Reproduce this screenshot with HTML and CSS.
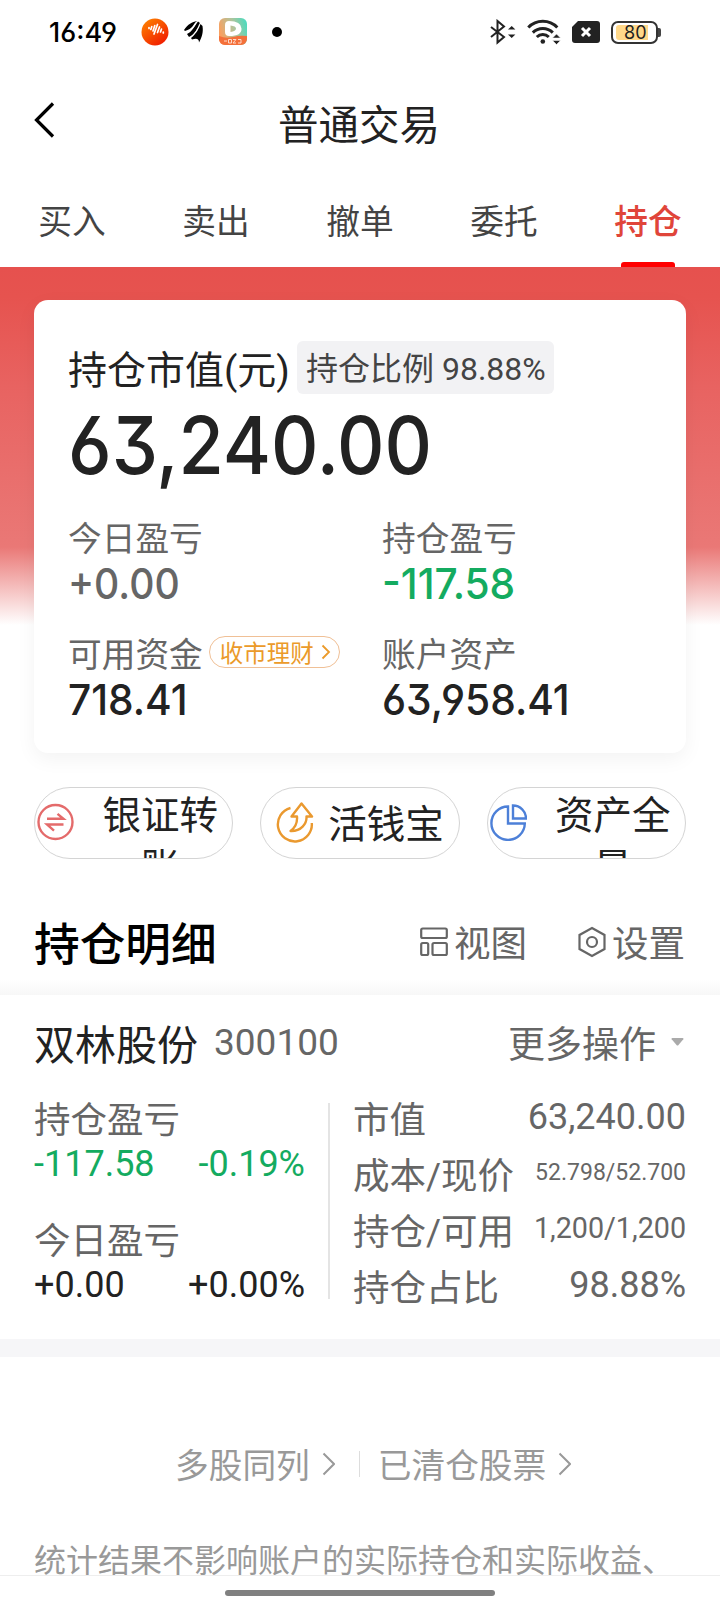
FILE: index.html
```html
<!DOCTYPE html>
<html lang="zh-CN">
<head>
    <meta charset="UTF-8">
    <meta name="viewport" content="width=device-width, initial-scale=1.0">
    <title>普通交易</title>
    <link rel="stylesheet" href="styles.css">
</head>
<body>
    <div class="page">
        <div class="status-bar">
            <span class="time">16:49</span>
            <div class="status-left">
                <svg width="28" height="28" viewBox="0 0 28 28">
                    <defs>
                        <linearGradient id="orange" x1="0" y1="0" x2="0.8" y2="1">
                            <stop offset="0" stop-color="#ff8a00"/>
                            <stop offset="1" stop-color="#f01800"/>
                        </linearGradient>
                    </defs>
                    <circle cx="14" cy="14" r="13.5" fill="url(#orange)"/>
                    <path d="M8 9.5v1M10.8 8.5l-1 3M13.800 7.500l-1.800 5.500M16.500 6.500l-3.500 9.500M18.500 9l-2 5.500M20.500 11l-1 3M22.300 14v1" stroke="#fff" stroke-width="1.700" stroke-linecap="round" fill="none"/>
                </svg>
                <svg width="20" height="22" viewBox="0 0 20 22">
                    <path d="M0 9C4 3 8 1 13 0C9 3 9 8 1 10z" fill="#000"/>
                    <path d="M3 13C8 11 10 6 14 0.500L16 2C14 7 10 14 5 16z" fill="#000"/>
                    <path d="M7 17C13 12 15 7 16.500 3L18.500 5C19.500 11 18 16 15 21.500C15 18 13 17 8 18.500z" fill="#000"/>
                    <path d="M12.500 1C10 5 9 9 3 11.500M15.800 2.500C14 8 11 13 6.500 16.500" stroke="#fff" stroke-width=".7" fill="none"/>
                </svg>
                <svg width="28" height="28" viewBox="0 0 28 28">
                    <defs>
                        <linearGradient id="rainbow" x1="0" y1="0.400" x2="1" y2="0.100">
                            <stop offset="0" stop-color="#f9a060"/>
                            <stop offset="0.500" stop-color="#b0c49c"/>
                            <stop offset="1" stop-color="#45dcc0"/>
                        </linearGradient>
                    </defs>
                    <rect width="28" height="27" rx="6" fill="url(#rainbow)"/>
                    <path d="M0 18q7 3 14 1t14-1v3a6 6 0 0 1-6 6H6a6 6 0 0 1-6-6z" fill="#f4703a"/>
                    <path d="M10 3q12 0 12.500 7.500T10 18q-4 0-4-4V7q0-4 4-4zM11.500 7.500v6.500q5.500-1 5.500-3.500t-5.500-3z" fill="#fff" fill-rule="evenodd"/>
                    <path d="M5 23h3M9.500 21.500h3v3.500h-3zM14 21.500h3l-3 3.500h3M19 21.500h3v3.500h-3" stroke="#ffd9c8" stroke-width="1" fill="none"/>
                </svg>
                <span class="dot"></span>
            </div>
            <div class="status-right">
                <svg width="26" height="26" viewBox="0 0 26 26" fill="none" stroke="#222" stroke-width="2">
                    <path d="M1 8l13 10-6.500 5.500V2L14 7.500 1 18"/>
                    <path d="M18 10.500l3.700-3.500 3.700 3.500zM18 15.500l3.700 3.500 3.700-3.500z" fill="#222" stroke="none"/>
                </svg>
                <svg width="34" height="26" viewBox="0 0 34 26" fill="none" stroke="#222" stroke-width="3">
                    <path d="M1.300 8.500a20 20 0 0 1 29 0M5.800 13.600a14 14 0 0 1 20 0M9.800 18a8.500 8.500 0 0 1 12 0"/>
                    <circle cx="15.800" cy="22.500" r="2.300" fill="#222" stroke="none"/>
                    <path d="M25.500 19l4-4 4 4zM25.500 21.500l4 4 4-4z" fill="#222" stroke="#fff" stroke-width=".5"/>
                </svg>
                <svg width="28" height="22" viewBox="0 0 28 22">
                    <path d="M6 0h19q3 0 3 3v16q0 3-3 3H3q-3 0-3-3V6z" fill="#222"/>
                    <path d="M10 7l8 8M18 7l-8 8" stroke="#fff" stroke-width="3"/>
                </svg>
                <div class="battery"><span class="battery-fill">80</span></div>
            </div>
        </div>

        <div class="nav">
            <svg class="back" width="22" height="38" viewBox="0 0 22 38">
                <path d="M19 2.500L2.500 19 19 35.500" fill="none" stroke="#000" stroke-width="3.200"/>
            </svg>
            <div class="nav-title">普通交易</div>
        </div>

        <div class="tabs">
            <div class="tab">买入</div>
            <div class="tab">卖出</div>
            <div class="tab">撤单</div>
            <div class="tab">委托</div>
            <div class="tab active">持仓</div>
        </div>

        <div class="hero">
            <div class="card">
                <div class="card-head">
                    <span class="card-title">持仓市值(元)</span>
                    <span class="ratio">持仓比例 98.88%</span>
                </div>
                <div class="total"><span>63,240.00</span></div>
                <div class="card-grid">
                    <div class="stat">
                        <div class="stat-label">今日盈亏</div>
                        <div class="stat-value flat"><span>+0.00</span></div>
                    </div>
                    <div class="stat">
                        <div class="stat-label">持仓盈亏</div>
                        <div class="stat-value green"><span>-117.58</span></div>
                    </div>
                    <div class="stat">
                        <div class="stat-label">可用资金
                            <span class="badge">收市理财
                                <svg width="10" height="16" viewBox="0 0 10 16"><path d="M1.500 1.500L8 8l-6.500 6.500" fill="none" stroke="#eb9a2a" stroke-width="1.800"/></svg>
                            </span>
                        </div>
                        <div class="stat-value"><span>718.41</span></div>
                    </div>
                    <div class="stat">
                        <div class="stat-label">账户资产</div>
                        <div class="stat-value"><span>63,958.41</span></div>
                    </div>
                </div>
            </div>
        </div>

        <div class="actions">
            <div class="action wrap">
                <svg width="38" height="38" viewBox="0 0 38 38" fill="none" stroke="#e46b6b" stroke-width="2.400">
                    <circle cx="19.500" cy="19" r="17"/>
                    <path d="M11 15.800h16.500l-6-5M27.500 21.500H11l7 6.200"/>
                </svg>
                <span>银证转账</span>
            </div>
            <div class="action">
                <svg width="38" height="42" viewBox="0 0 38 42" fill="none" stroke="#ea992f" stroke-width="2.400" stroke-linejoin="round">
                    <path d="M14.500 6A17 17 0 1 0 35.800 21"/>
                    <path d="M25.500 1.500L36 14.500h-5.500C31 21.500 25 29.500 14.500 29C20 25 21.500 20.500 21 14.500h-5.500z"/>
                </svg>
                <span>活钱宝</span>
            </div>
            <div class="action wrap">
                <svg width="38" height="38" viewBox="0 0 38 38" fill="none" stroke="#4d80d8" stroke-width="2.400">
                    <path d="M19 3.500A16.700 16.700 0 1 0 35.800 20.500H19z"/>
                    <path d="M24 2.500V15.500H37A13 13 0 0 0 24 2.500z"/>
                </svg>
                <span>资产全景</span>
            </div>
        </div>

        <div class="section-head">
            <div class="section-title">持仓明细</div>
            <div class="tool">
                <svg width="28" height="30" viewBox="0 0 28 30" fill="none" stroke="#666" stroke-width="2.200">
                    <rect x="1.200" y="1.500" width="25.600" height="9.500" rx="1.500"/>
                    <rect x="1.200" y="16" width="7" height="12" rx="1.500"/>
                    <rect x="12.500" y="16" width="14.300" height="12" rx="1.500"/>
                </svg>
                <span>视图</span>
            </div>
            <div class="tool">
                <svg width="28" height="32" viewBox="0 0 28 32" fill="none" stroke="#666" stroke-width="2.200">
                    <path d="M14 2l12.500 7v14L14 30 1.500 23V9z"/>
                    <circle cx="14" cy="16" r="5"/>
                </svg>
                <span>设置</span>
            </div>
        </div>

        <div class="holding">
            <div class="holding-head">
                <span class="stock-name">双林股份</span>
                <span class="stock-code">300100</span>
                <span class="more">更多操作</span>
                <svg width="13" height="8" viewBox="0 0 13 8"><path d="M1.500 0h10q1.500 0 .8 1.200L7.500 7q-1 1-2 0L.7 1.200Q0 0 1.500 0z" fill="#aaa"/></svg>
            </div>
            <div class="holding-body">
                <div class="profit">
                    <div class="label">持仓盈亏</div>
                    <div class="values green"><span>-117.58</span><span>-0.19%</span></div>
                    <div class="label second">今日盈亏</div>
                    <div class="values"><span>+0.00</span><span>+0.00%</span></div>
                </div>
                <div class="detail">
                    <div class="row"><span>市值</span><span class="num">63,240.00</span></div>
                    <div class="row"><span>成本/现价</span><span class="num small">52.798/52.700</span></div>
                    <div class="row"><span>持仓/可用</span><span class="num medium">1,200/1,200</span></div>
                    <div class="row"><span>持仓占比</span><span class="num">98.88%</span></div>
                </div>
            </div>
        </div>

        <div class="links">
            <span>多股同列</span>
            <svg width="13" height="24" viewBox="0 0 13 24"><path d="M1.500 1.500L12 12 1.500 22.500" fill="none" stroke="#999" stroke-width="2"/></svg>
            <i class="split"></i>
            <span>已清仓股票</span>
            <svg width="13" height="24" viewBox="0 0 13 24"><path d="M1.500 1.500L12 12 1.500 22.500" fill="none" stroke="#999" stroke-width="2"/></svg>
        </div>

        <div class="note">统计结果不影响账户的实际持仓和实际收益、</div>

        <div class="home-area"><div class="home-bar"></div></div>
    </div>
</body>
</html>
```
FILE: styles.css
```css
* {
    box-sizing: border-box;
}

body {
    margin: 0;
    background-color: #fff;
    font-family: Roboto, "Noto Sans CJK SC", sans-serif;
    color: #222;
}

svg {
    display: block;
    flex-shrink: 0;
}

.page {
    width: 720px;
    height: 1612px;
    overflow: hidden;
    display: flex;
    flex-direction: column;
    white-space: nowrap;
}

/* status bar */
.status-bar {
    height: 64px;
    padding: 0 58px 0 49px;
    display: flex;
    align-items: center;
}

.time {
    width: 92px;
    font-family: Inter, sans-serif;
    font-feature-settings: "cv03", "cv04";
    font-size: 27px;
    font-weight: 500;
    color: #000;
}

.status-left {
    display: flex;
    align-items: center;
    gap: 15px;
}

.dot {
    width: 10px;
    height: 10px;
    margin-left: 10px;
    border-radius: 50%;
    background-color: #000;
}

.status-right {
    display: flex;
    align-items: center;
    gap: 11px;
    margin-left: auto;
}

.battery {
    position: relative;
    width: 47px;
    height: 23px;
    padding: 3px;
    margin-right: 4px;
    border: 2px solid #333;
    border-radius: 7px;
}

.battery::after {
    content: "";
    position: absolute;
    right: -5px;
    top: 5px;
    width: 3px;
    height: 9px;
    border-radius: 0 2px 2px 0;
    background-color: #444;
}

.battery-fill {
    display: block;
    width: 32px;
    height: 15px;
    margin-top: -1px;
    padding-left: 8px;
    border-radius: 3px 0 0 3px;
    background-color: #ffd88a;
    font-family: Inter, sans-serif;
    font-size: 18px;
    line-height: 15px;
}

/* title */
.nav {
    height: 116px;
    padding: 0 34px;
    display: grid;
    grid-template-columns: 22px 1fr 22px;
    align-items: center;
}

.back {
    margin-bottom: 4px;
}

.nav-title {
    text-align: center;
    font-size: 40.5px;
    margin-left: -2px;
}

.tabs {
    height: 87px;
    display: grid;
    grid-template-columns: repeat(5, 1fr);
}

.tab {
    display: flex;
    flex-direction: column;
    align-items: center;
    padding-top: 18px;
    font-size: 33.7px;
    line-height: 50px;
    color: #444;
}

.tab.active {
    color: #e0453a;
    font-weight: 500;
}

.tab.active::after {
    content: "";
    width: 54px;
    height: 5px;
    margin-top: 14px;
    border-radius: 3px 3px 0 0;
    background-color: #f00;
}

/* summary card */
.hero {
    height: 486px;
    padding: 33px 34px 0;
    background: linear-gradient(#e6514e 0, #e6534f 30px, #e86361 120px, #ea7876 280px, #ffffff 358px);
}

.card {
    height: 453px;
    padding: 41px 34px 0;
    border-radius: 14px;
    background-color: #fff;
    box-shadow: 0 6px 20px rgba(0, 0, 0, 0.05);
}

.card-head {
    display: flex;
    align-items: center;
    height: 53px;
}

.card-title {
    width: 229px;
    padding-bottom: 2px;
    font-size: 39px;
}

.ratio {
    width: 257px;
    height: 53px;
    padding-left: 9px;
    border-radius: 6px;
    background-color: #f2f2f4;
    font-size: 32px;
    line-height: 56px;
    color: #444;
}

.total {
    height: 117px;
    font-family: Inter, sans-serif;
    font-feature-settings: "cv03", "cv04", "cv09";
    font-size: 80px;
    font-weight: 500;
    line-height: 101px;
}

.total span,
.stat-value span {
    display: inline-block;
    transform: scaleX(0.92);
    transform-origin: left;
}

.stat-value span {
    transform: scaleX(0.945);
}

.card-grid {
    display: grid;
    grid-template-columns: 314px 1fr;
    row-gap: 17px;
}

.stat-label {
    display: flex;
    align-items: center;
    height: 49px;
    padding-top: 2px;
    font-size: 33.7px;
    color: #666;
}

.stat-value {
    height: 50px;
    font-family: Inter, sans-serif;
    font-feature-settings: "cv03", "cv04", "cv09";
    font-size: 43px;
    font-weight: 500;
    line-height: 46px;
}

.badge {
    display: flex;
    align-items: center;
    gap: 7px;
    width: 131px;
    height: 32px;
    margin: 0 0 2px 6px;
    padding-left: 10px;
    border: 1px solid #f0c096;
    border-radius: 16px;
    font-size: 23.5px;
    color: #eb9a2a;
}

.flat {
    color: #666;
}

.flat span {
    transform: scaleX(0.91);
}

.green {
    color: #14ab60;
}

/* shortcut pills */
.actions {
    display: grid;
    grid-template-columns: repeat(3, 1fr);
    gap: 27px;
    padding: 34px 34px 0;
}

.action {
    display: flex;
    align-items: center;
    justify-content: center;
    gap: 14px;
    height: 72px;
    overflow: hidden;
    border: 1px solid #d4d4d4;
    border-radius: 36px;
    font-size: 38.5px;
    line-height: 52px;
}

.action span {
    padding-top: 4px;
}

.action.wrap {
    align-items: flex-start;
    justify-content: flex-start;
    gap: 20px;
    padding-left: 1px;
}

.action.wrap svg {
    margin-top: 15px;
}

.action.wrap span {
    flex: 1;
    padding: 2px 13px 0 7px;
    text-align: center;
    white-space: normal;
}

/* positions */
.section-head {
    display: flex;
    align-items: center;
    height: 136px;
    padding: 28px 35px 0 34px;
    background: linear-gradient(#fff 120px, #f7f7f7 136px);
}

.section-title {
    flex: 1;
    font-size: 45.700px;
    font-weight: 500;
    color: #000;
}

.tool {
    display: flex;
    align-items: center;
    gap: 6px;
    margin-left: 51px;
    font-size: 36.5px;
    color: #666;
}

.tool svg {
    margin-bottom: -1px;
}

.holding {
    height: 362px;
    padding: 17px 34px 0;
    border-bottom: 18px solid #f6f6f8;
}

.holding-head {
    display: flex;
    align-items: center;
    height: 60px;
}

.stock-name {
    width: 180px;
    font-size: 41px;
}

.stock-code {
    flex: 1;
    font-size: 37px;
    color: #666;
}

.more {
    margin-right: 15px;
    padding-bottom: 1px;
    font-size: 37px;
    color: #666;
}

.holding-head svg {
    margin-right: 2px;
}

.holding-body {
    display: flex;
    padding-top: 31px;
    font-size: 36.5px;
    line-height: 44px;
}

.profit {
    width: 296px;
    height: 196px;
    padding-right: 23px;
    border-right: 2px solid #e4e4e4;
}

.label {
    height: 39px;
    line-height: 36px;
    color: #666;
}

.label.second {
    margin-top: 38px;
}

.values {
    display: flex;
    justify-content: space-between;
    font-size: 36px;
}

.detail {
    flex: 1;
    padding-left: 23px;
    margin-top: -10px;
    color: #666;
}

.row {
    display: flex;
    justify-content: space-between;
    height: 56px;
    line-height: 56px;
}

.num {
    font-size: 36px;
    line-height: 48px;
}

.num.small {
    font-size: 23px;
    line-height: 47px;
}

.num.medium {
    font-size: 28.700px;
    line-height: 47px;
}

/* footer */
.links {
    display: flex;
    align-items: center;
    height: 168px;
    padding: 45px 0 0 175px;
    font-size: 33.7px;
    color: #999;
}

.links svg {
    margin-left: 12px;
}

.split {
    width: 1px;
    height: 26px;
    margin: 0 18px 0 24px;
    background-color: #ddd;
}

.note {
    height: 51px;
    padding-left: 34px;
    overflow: hidden;
    border-bottom: 1px solid #eee;
    font-size: 32px;
    line-height: 73px;
    color: #999;
}

.home-area {
    display: flex;
    justify-content: center;
    padding-top: 14px;
}

.home-bar {
    width: 270px;
    height: 6px;
    border-radius: 3px;
    background-color: #808080;
}
```
